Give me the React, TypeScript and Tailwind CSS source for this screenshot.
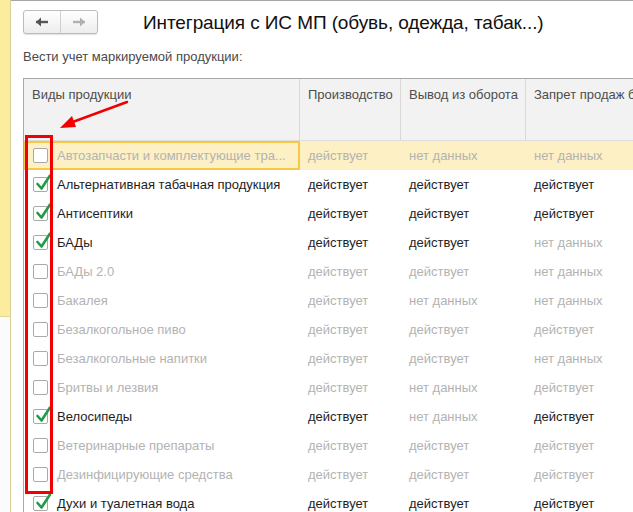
import React from "react";

type Row = { name: string; on: boolean; v: [string, string, string] };

const D = "действует";
const N = "нет данных";

const rows: Row[] = [
  { name: "Автозапчасти и комплектующие тра...", on: false, v: [D, N, N] },
  { name: "Альтернативная табачная продукция", on: true, v: [D, D, D] },
  { name: "Антисептики", on: true, v: [D, D, D] },
  { name: "БАДы", on: true, v: [D, D, N] },
  { name: "БАДы 2.0", on: false, v: [D, D, N] },
  { name: "Бакалея", on: false, v: [D, N, N] },
  { name: "Безалкогольное пиво", on: false, v: [D, D, D] },
  { name: "Безалкогольные напитки", on: false, v: [D, D, N] },
  { name: "Бритвы и лезвия", on: false, v: [D, N, D] },
  { name: "Велосипеды", on: true, v: [D, N, D] },
  { name: "Ветеринарные препараты", on: false, v: [D, D, D] },
  { name: "Дезинфицирующие средства", on: false, v: [D, D, D] },
  { name: "Духи и туалетная вода", on: true, v: [D, D, D] },
];

function Check({ on }: { on: boolean }) {
  return (
    <div className="relative w-[15px] h-[15px] shrink-0 border border-[#a9a9a9] rounded-[2px] bg-white">
      {on && (
        <svg className="absolute left-[1px] top-[-6px]" width="17" height="20" viewBox="0 0 17 20">
          <path d="M2.5 12 L6.5 16.5 L15 3.5" fill="none" stroke="#1f9a46" strokeWidth="2.6" strokeLinecap="round" strokeLinejoin="round" />
        </svg>
      )}
    </div>
  );
}

export default function App() {
  return (
    <div className="relative w-[633px] h-[512px] overflow-hidden bg-white flex" style={{ fontFamily: '"Liberation Sans", Arial, sans-serif' }}>
      <div className="w-[11px] shrink-0 flex flex-col border-r border-[#d9cf9c]">
        <div className="h-[317px] bg-[#fcec9e] border-b border-[#e3d79a]" />
        <div className="flex-1 bg-[#fbfbfb]" />
      </div>
      <div className="flex-1 flex flex-col border-t border-[#a6a6a6] min-w-0">
        <div className="flex items-center pl-[12px] pt-[9px] h-[33px]">
          <div className="flex h-[24px] border border-[#bdbdbd] rounded-[3px] bg-gradient-to-b from-white to-[#ededed] shadow-[0_1px_1px_rgba(0,0,0,0.12)]">
            <div className="w-[37px] flex items-center justify-center border-r border-[#d0d0d0]">
              <svg width="14" height="10" viewBox="0 0 14 10">
                <path d="M1 5 H13" stroke="#555" strokeWidth="2.4" />
                <path d="M1 5 L6 0.5 V9.5 Z" fill="#555" />
              </svg>
            </div>
            <div className="w-[36px] flex items-center justify-center">
              <svg width="14" height="10" viewBox="0 0 14 10">
                <path d="M1 5 H13" stroke="#b0b0b0" strokeWidth="2.4" />
                <path d="M13 5 L8 0.5 V9.5 Z" fill="#b0b0b0" />
              </svg>
            </div>
          </div>
          <div className="ml-[45px] text-[19px] tracking-[-0.1px] text-[#111] leading-none whitespace-nowrap">Интеграция с ИС МП (обувь, одежда, табак...)</div>
        </div>
        <div className="pl-[12px] mt-[16px] text-[13px] text-[#4a4a4a] leading-none">Вести учет маркируемой продукции:</div>
        <div className="ml-[12px] mt-[15px] border-t border-l border-[#a9a9a9] overflow-hidden">
          <div className="grid grid-cols-[276px_101px_125px_200px] h-[62px] bg-[#f2f2f2] border-b border-[#dcdcdc] text-[13px] text-[#4d4d4d]">
            <div className="pl-[8px] pt-[6px] border-r border-[#d8d8d8]">Виды продукции</div>
            <div className="pl-[8px] pt-[6px] border-r border-[#d8d8d8] whitespace-nowrap">Производство</div>
            <div className="pl-[8px] pt-[6px] border-r border-[#d8d8d8] whitespace-nowrap">Вывод из оборота</div>
            <div className="pl-[8px] pt-[6px] whitespace-nowrap overflow-hidden">Запрет продаж без</div>
          </div>
          {rows.map((r, i) => {
            const hl = i === 0;
            return (
              <div key={i} className={`grid grid-cols-[276px_101px_125px_200px] h-[29px] text-[13px] ${hl ? "bg-[#fcf0c4]" : ""}`}>
                <div className={`flex items-center gap-[9px] whitespace-nowrap ${hl ? "border-2 border-[#f6c843] pl-[7px]" : "pl-[9px]"} ${r.on ? "text-[#1e1e1e]" : "text-[#b3b3b3]"}`}>
                  <Check on={r.on} />
                  <span>{r.name}</span>
                </div>
                {r.v.map((v, j) => (
                  <div key={j} className={`flex items-center pl-[8px] whitespace-nowrap ${r.on && v === D ? "text-[#1e1e1e]" : "text-[#b3b3b3]"}`}>
                    {v}
                  </div>
                ))}
              </div>
            );
          })}
        </div>
      </div>
      <svg className="absolute left-0 top-0 pointer-events-none" width="633" height="512">
        <rect x="26.5" y="136.5" width="25" height="356" fill="none" stroke="#f00000" strokeWidth="3" />
        <path d="M127 102 L70 123" stroke="#f00000" strokeWidth="2.5" strokeLinecap="round" />
        <path d="M60 128 L72 116 L76 127 Z" fill="#f00000" />
      </svg>
    </div>
  );
}
